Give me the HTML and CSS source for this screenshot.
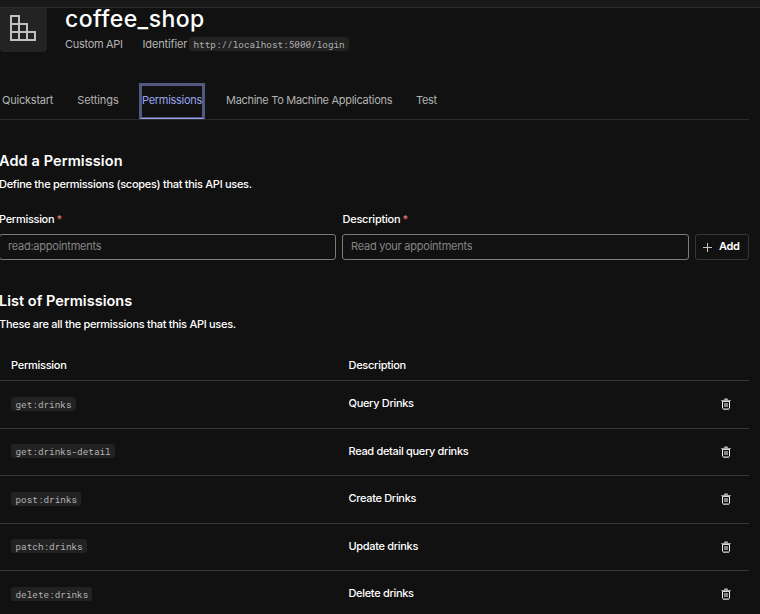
FILE: index.html
```html
<!DOCTYPE html>
<html lang="en">
<head>
<meta charset="utf-8">
<title>coffee_shop</title>
<link rel="stylesheet" href="styles.css">
</head>
<body>
<svg class="sprite" width="0" height="0">
  <symbol id="trash" viewBox="0 0 10 12">
    <path d="M3 1.5h4M.2 2.5h9.6" stroke="#a5a5a5" stroke-width="1"/>
    <path d="M3.5 .5h3" stroke="#777"/>
    <path d="M1.5 3v7.5M8.5 3v7.5" stroke="#f2f2f2" stroke-width="1"/>
    <path d="M1 3.5h8" stroke="#d8d8d8"/>
    <path d="M2 11.5h6" stroke="#aaa"/><path d="M2 10.5h6" stroke="#777"/>
    <path d="M3 5h4v4H3z" fill="#858585"/>
  </symbol>
</svg>
<div class="topbar"></div>
<header class="header">
  <div class="logo">
    <svg width="26" height="26" viewBox="0 0 26 26" fill="none" stroke="#c0c0c0" stroke-width="2"><path d="M1 1h8v8h8v8h8v8H1zM1 9h8v16M1 17h16v8"/></svg>
  </div>
  <div class="heading">
    <h1>coffee_shop</h1>
    <div class="meta"><span class="kind">Custom API</span><span class="ident">Identifier</span><code>http://localhost:5000/login</code></div>
  </div>
</header>
<nav class="tabs">
  <a class="quick">Quickstart</a><a class="settings">Settings</a><a class="active"><span>Permissions</span></a><a class="machine">Machine To Machine Applications</a><a class="test">Test</a>
</nav>
<main>
  <section class="add">
    <h2 class="add-title">Add a Permission</h2>
    <p class="add-copy">Define the permissions (scopes) that this API uses.</p>
    <div class="form">
      <div class="field"><label class="first">Permission <i>*</i></label><div class="input">read:appointments</div></div>
      <div class="field"><label>Description <i>*</i></label><div class="input second">Read your appointments</div></div>
      <button><svg width="9" height="9" viewBox="0 0 9 9"><path d="M4.5 0v9M0 4.5h9" stroke="#c4c4c4"/></svg><span>Add</span></button>
    </div>
  </section>
  <section class="list">
    <h2 class="list-title">List of Permissions</h2>
    <p class="list-copy">These are all the permissions that this API uses.</p>
    <div class="table">
      <div class="row head"><b>Permission</b><b>Description</b></div>
      <div class="row"><code>get:drinks</code><span>Query Drinks</span><svg class="trash"><use href="#trash"/></svg></div>
      <div class="row short"><code>get:drinks-detail</code><span>Read detail query drinks</span><svg class="trash"><use href="#trash"/></svg></div>
      <div class="row"><code>post:drinks</code><span>Create Drinks</span><svg class="trash"><use href="#trash"/></svg></div>
      <div class="row short"><code>patch:drinks</code><span>Update drinks</span><svg class="trash"><use href="#trash"/></svg></div>
      <div class="row"><code>delete:drinks</code><span>Delete drinks</span><svg class="trash"><use href="#trash"/></svg></div>
    </div>
  </section>
</main>
</body>
</html>
```
FILE: styles.css
```css
* { box-sizing: border-box; }
body { margin: 0; height: 614px; overflow: hidden; background: #111; color: #fff; font: 11px/16px Inter, "Liberation Sans", sans-serif; letter-spacing: -.24px; }
h1, h2, p { margin: 0; white-space: nowrap; }
.sprite { display: block; }
.topbar { height: 8px; background: #191919; border-bottom: 1px solid #2b2b2b; }
.header { display: flex; height: 44px; }
.logo { width: 47px; height: 44px; background: #232323; border-radius: 0 0 4px 4px; padding: 7px 0 0 10px; }
.logo svg { display: block; }
.heading { padding-left: 18px; }
h1 { font-size: 23px; line-height: 28px; font-weight: 500; margin-top: -3px; letter-spacing: .42px; }
.meta { display: flex; align-items: center; height: 16px; margin-top: 3px; color: #b3b3b3; white-space: nowrap; }
.kind { width: 77.5px; letter-spacing: -.3px; }
.ident { width: 46.5px; letter-spacing: -.15px; }
code { display: block; width: max-content; height: 14px; padding: 0 4px 0 4.5px; border-radius: 3px; background: #222; color: #b0b0b0; font: 9.3px/15px "Roboto Mono", "Liberation Mono", monospace; letter-spacing: .02px; }
.tabs { display: flex; height: 68px; border-bottom: 1px solid #2b2b2b; padding: 31px 0 0 2px; line-height: 34px; color: #b3b3b3; white-space: nowrap; letter-spacing: -.29px; }
.quick { width: 75.3px; letter-spacing: -.22px; }
.settings { width: 61.7px; letter-spacing: -.1px; }
.active { width: 66px; height: 36px; border: 3px solid #52587f; border-bottom: 1px solid #99a7f1; box-shadow: inset 0 -1px #52587f; color: #99a7f1; line-height: 29px; text-align: center; }
.machine { width: 190px; margin-left: 21px; }
.tabs, .table { width: 749px; }
h2 { font-size: 14.5px; line-height: 20px; font-weight: 600; letter-spacing: .1px; margin-left: -1px; }
.list-title { letter-spacing: .02px; }
.add { padding-top: 31px; }
.add-copy, .list-copy { margin: 5px 0 0 -1px; font-weight: 500; letter-spacing: -.29px; }
.form { display: grid; grid-template-columns: 336px 347px 54px; column-gap: 6px; width: 749px; margin-top: 19px; align-items: end; }
label { display: block; font-weight: 500; line-height: 16px; margin-bottom: 7px; padding-left: .5px; }
label.first { margin-left: -1px; padding-left: 0; letter-spacing: -.3px; }
label i { color: #e4796f; font-style: normal; margin-left: -.5px; }
.input { height: 26px; border: 1px solid #7b7b7b; border-radius: 3px; padding-left: 7px; line-height: 23px; color: #858585; }
.field:first-child .input { margin-left: -1px; padding-left: 8px; }
.second { padding-left: 8px; }
button { display: flex; align-items: center; height: 26px; padding: 0 0 2px 7px; border: 1px solid #363636; border-radius: 3px; background: #111; color: #fff; font: 600 11px/16px Inter, sans-serif; letter-spacing: -.3px; }
button svg { position: relative; top: 1px; }
button span { margin-left: 7px; }
.list { padding-top: 31px; }
.table { margin-top: 17px; }
.row { display: grid; grid-template-columns: 337.5px 370px 30px; padding: 0 0 2px 11px; height: 48px; border-bottom: 1px solid #363636; align-items: center; }
.row.short { height: 47px; padding-bottom: 0; }
.row.head { height: 32px; padding-bottom: 0; }
.row:last-child { border: 0; padding-bottom: 3px; }
.row b { font-weight: 500; letter-spacing: -.28px; }
.row span { font-weight: 500; letter-spacing: -.32px; margin-bottom: 2px; }
.row code { margin-top: 1px; }
.row.short code { margin: 0 0 2px; }
.trash { display: block; width: 10px; height: 12px; margin-left: 2px; }
```
